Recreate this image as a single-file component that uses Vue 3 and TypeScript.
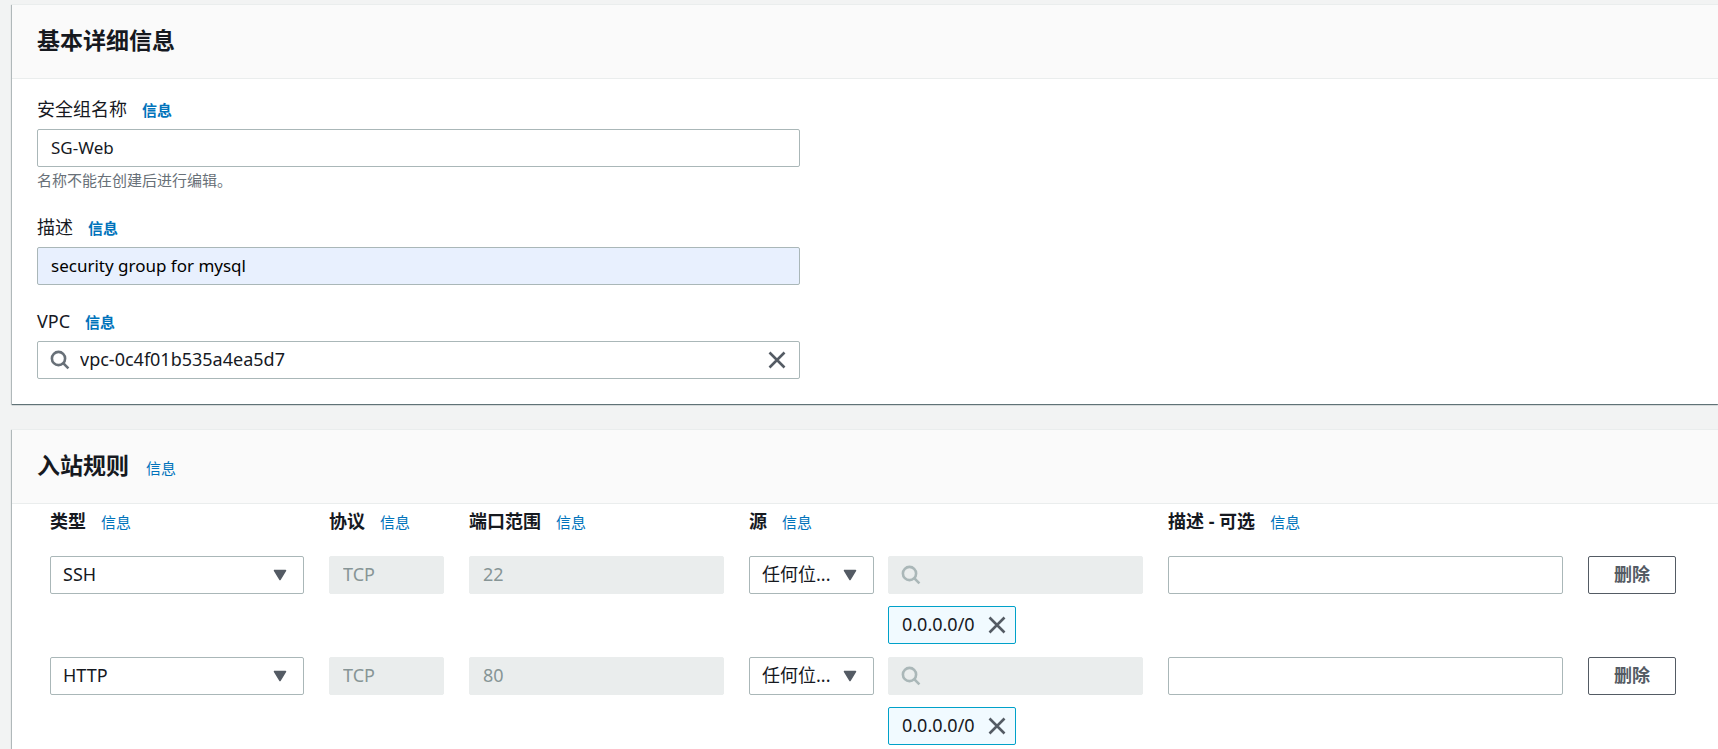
<script setup lang="ts">
import { ref } from 'vue'

interface Column {
  id: string
  title: string
}

interface Rule {
  type: string
  protocol: string
  port: string
  source: string
  cidr: string
  description: string
}

const groupName = ref('SG-Web')
const description = ref('security group for mysql')
const vpc = ref('vpc-0c4f01b535a4ea5d7')

const columns: Column[] = [
  { id: 'col-type', title: '类型' },
  { id: 'col-protocol', title: '协议' },
  { id: 'col-port', title: '端口范围' },
  { id: 'col-source', title: '源' },
  { id: 'col-description', title: '描述 - 可选' },
]

const types = ['SSH', 'HTTP']
const sources = ['任何位...']

const rules = ref<Rule[]>([
  { type: 'SSH', protocol: 'TCP', port: '22', source: '任何位...', cidr: '0.0.0.0/0', description: '' },
  { type: 'HTTP', protocol: 'TCP', port: '80', source: '任何位...', cidr: '0.0.0.0/0', description: '' },
])

function removeRule(index: number) {
  rules.value.splice(index, 1)
}
</script>

<template>
  <main class="page">
    <section class="panel">
      <header class="panel-header">
        <h2 class="title">基本详细信息</h2>
      </header>
      <div class="details">
        <div class="field">
          <div class="label-row">
            <label for="group-name">安全组名称</label>
            <a class="info strong" href="#">信息</a>
          </div>
          <input id="group-name" v-model="groupName" class="control" type="text" />
          <p class="hint">名称不能在创建后进行编辑。</p>
        </div>
        <div class="field">
          <div class="label-row">
            <label for="group-description">描述</label>
            <a class="info strong" href="#">信息</a>
          </div>
          <input id="group-description" v-model="description" class="control autofilled" type="text" />
        </div>
        <div class="field">
          <div class="label-row">
            <label for="vpc">VPC</label>
            <a class="info strong" href="#">信息</a>
          </div>
          <div class="search">
            <svg class="search-icon" viewBox="0 0 20 20" aria-hidden="true">
              <circle cx="8.5" cy="8.5" r="6.6" />
              <path d="M13.2 13.2 18.4 18.4" />
            </svg>
            <input id="vpc" v-model="vpc" class="control" type="text" />
            <button class="icon-button clear" type="button" aria-label="清除" @click="vpc = ''">
              <svg class="close-icon" viewBox="0 0 18 18" aria-hidden="true">
                <path d="M1.5 1.5 16.5 16.5M16.5 1.5 1.5 16.5" />
              </svg>
            </button>
          </div>
        </div>
      </div>
    </section>

    <section class="panel">
      <header class="panel-header">
        <h2 class="title">入站规则</h2>
        <a class="info" href="#">信息</a>
      </header>
      <div class="rules">
        <div class="rule-grid heading-row">
          <div v-for="column in columns" :key="column.id" class="label-row">
            <span :id="column.id" class="column-title">{{ column.title }}</span>
            <a class="info" href="#">信息</a>
          </div>
        </div>
        <div v-for="(rule, index) in rules" :key="index" class="rule-grid">
          <div class="select">
            <select v-model="rule.type" class="control" aria-labelledby="col-type">
              <option v-for="type in types" :key="type">{{ type }}</option>
            </select>
            <svg class="caret" viewBox="0 0 14 12" aria-hidden="true">
              <path d="M1.5 1.5H12.5L7 10.5Z" />
            </svg>
          </div>
          <input class="control" type="text" disabled :value="rule.protocol" aria-labelledby="col-protocol" />
          <input class="control" type="text" disabled :value="rule.port" aria-labelledby="col-port" />
          <div class="source">
            <div class="select">
              <select v-model="rule.source" class="control" aria-labelledby="col-source">
                <option v-for="source in sources" :key="source">{{ source }}</option>
              </select>
              <svg class="caret" viewBox="0 0 14 12" aria-hidden="true">
                <path d="M1.5 1.5H12.5L7 10.5Z" />
              </svg>
            </div>
            <div class="source-values">
              <div class="search disabled">
                <svg class="search-icon" viewBox="0 0 20 20" aria-hidden="true">
                  <circle cx="8.5" cy="8.5" r="6.6" />
                  <path d="M13.2 13.2 18.4 18.4" />
                </svg>
                <input class="control" type="text" disabled aria-labelledby="col-source" />
              </div>
              <div class="token">
                <span class="token-text">{{ rule.cidr }}</span>
                <button class="icon-button" type="button" :aria-label="'移除 ' + rule.cidr">
                  <svg class="close-icon" viewBox="0 0 18 18" aria-hidden="true">
                    <path d="M1.5 1.5 16.5 16.5M16.5 1.5 1.5 16.5" />
                  </svg>
                </button>
              </div>
            </div>
          </div>
          <input v-model="rule.description" class="control" type="text" aria-labelledby="col-description" />
          <button class="remove" type="button" @click="removeRule(index)">删除</button>
        </div>
      </div>
    </section>
  </main>
</template>

<style>
body {
  background: #f2f3f3;
}
</style>

<style scoped>
*,
*::before,
*::after {
  box-sizing: border-box;
}

.page {
  display: flex;
  flex-direction: column;
  gap: 25px;
  padding: 4px 0 0 12px;
  color: #16191f;
  font-family: "Noto Sans", "Noto Sans CJK SC", sans-serif;
  font-size: 18px;
  line-height: 25px;
}

.panel {
  background: #fff;
  border-top: 1px solid #eaeded;
  box-shadow: 0 1px 1px 0 rgba(0, 28, 36, 0.5), -1px 1px 1px 0 rgba(0, 28, 36, 0.2);
}

.panel-header {
  display: flex;
  align-items: baseline;
  gap: 17px;
  padding: 20px 25px 23px;
  background: #fafafa;
  border-bottom: 1px solid #eaeded;
}

.title {
  margin: 0;
  font-size: 23px;
  font-weight: 700;
  line-height: 30px;
}

.details {
  display: grid;
  grid-template-columns: minmax(0, 763fr) minmax(0, 893fr);
  row-gap: 25px;
  padding: 19px 25px 25px;
}

.field {
  grid-column: 1;
}

.label-row {
  display: flex;
  align-items: baseline;
  gap: 15px;
  height: 25px;
  line-height: 22px;
}

.field .label-row {
  margin-bottom: 6px;
}

.info {
  color: #0073bb;
  font-size: 15px;
  line-height: 20px;
  text-decoration: none;
}

.info.strong {
  font-weight: 700;
}

.hint {
  margin: 3px 0 1px;
  color: #687078;
  font-size: 15px;
  line-height: 20px;
}

.control {
  display: block;
  width: 100%;
  min-width: 0;
  height: 38px;
  margin: 0;
  padding: 0 13px 2px;
  color: #16191f;
  font: inherit;
  background: #fff;
  border: 1px solid #aab7b8;
  border-radius: 2px;
  appearance: none;
}

.field > .control {
  font-size: 17px;
}

.control.autofilled {
  color: #000;
  background: #e8f0fe;
}

.control:disabled {
  color: #879596;
  background: #eaeded;
  border-color: #eaeded;
}

.search,
.select {
  position: relative;
}

.search .control {
  padding: 0 42px 2px;
}

.select .control {
  padding-left: 12px;
}

.search-icon {
  position: absolute;
  top: 9px;
  left: 13px;
  width: 20px;
  height: 20px;
  fill: none;
  stroke: #687078;
  stroke-width: 2.6;
}

.search.disabled .search-icon {
  stroke: #aab7b8;
}

.icon-button {
  display: flex;
  padding: 0;
  background: none;
  border: 0;
}

.clear {
  position: absolute;
  top: 10px;
  right: 14px;
}

.close-icon {
  width: 18px;
  height: 18px;
  fill: none;
  stroke: #545b64;
  stroke-width: 2.6;
}

.caret {
  position: absolute;
  top: 13px;
  right: 17px;
  width: 14px;
  height: 12px;
  fill: #545b64;
  stroke: #545b64;
  stroke-width: 1.5;
  stroke-linejoin: round;
  pointer-events: none;
}

.rules {
  display: flex;
  flex-direction: column;
  gap: 13px;
  padding: 6px 42px 25px 38px;
}

.rule-grid {
  display: grid;
  grid-template-columns:
    minmax(0, 254fr) minmax(0, 115fr) minmax(0, 255fr)
    minmax(0, 394fr) minmax(0, 395fr) 88px;
  column-gap: 25px;
  align-items: start;
}

.heading-row {
  padding-bottom: 8px;
}

.column-title {
  font-weight: 700;
}

.source {
  display: grid;
  grid-template-columns: minmax(0, 125fr) minmax(0, 255fr);
  column-gap: 14px;
}

.source-values {
  display: flex;
  flex-direction: column;
  align-items: flex-start;
  gap: 12px;
}

.source-values .search {
  width: 100%;
}

.token {
  display: flex;
  align-items: center;
  gap: 13px;
  height: 38px;
  padding: 0 9px 0 13px;
  background: #f1faff;
  border: 1px solid #00a1c9;
  border-radius: 2px;
}

.token-text {
  padding-bottom: 2px;
}

.remove {
  height: 38px;
  padding: 0 0 2px;
  color: #545b64;
  font: inherit;
  font-weight: 700;
  background: #fff;
  border: 1px solid #545b64;
  border-radius: 2px;
}
</style>
